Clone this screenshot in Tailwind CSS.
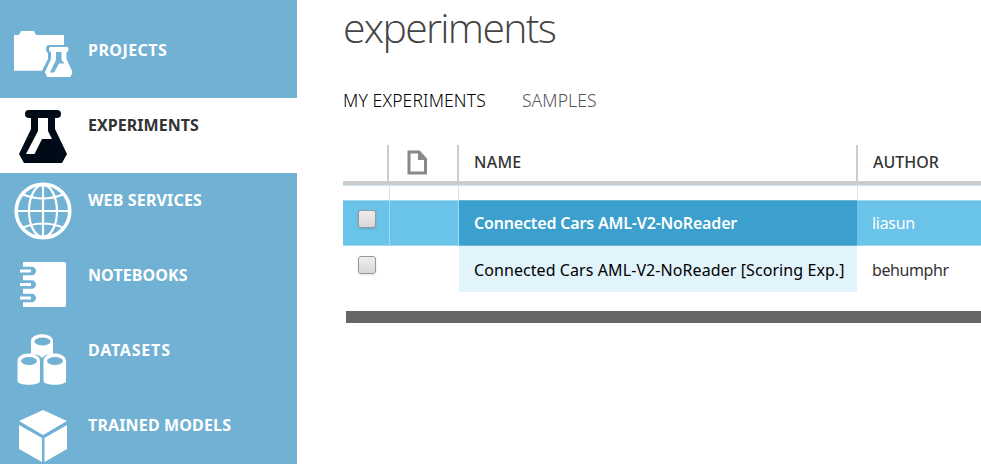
<!DOCTYPE html>
<html lang="en">
<head>
<meta charset="utf-8">
<title>experiments</title>
<script src="https://cdn.jsdelivr.net/npm/@tailwindcss/browser@4"></script>
</head>
<body class="flex h-[464px] w-[981px] overflow-hidden bg-white font-['Noto_Sans','Open_Sans',sans-serif] text-base leading-6 whitespace-nowrap">
<nav class="h-[464px] w-[297px] shrink-0 overflow-hidden bg-[#71b1d3] pt-[23px] font-bold text-white">
  <a class="flex h-[75px]">
    <svg class="h-[75px] w-[88px] shrink-0" viewBox="0 0 88 75" fill="#fff"><path d="M14 12h5l2-4h13l2 4h28v10H49q-3 0-3 4 0 3 2 4v6l-6 11.700H14z"/><path fill-rule="evenodd" d="M50 24h17q1.500 0 1.500 2.500T66.500 29v7l6 13-2 5H47l-2-5 6-13v-7q-2 0-2-2.500T50 24zM56 29v8l-6 12.500h4l5-9h5.500l-3-3.500v-8z"/></svg>
    <span class="pt-[15px] tracking-[0.45px]">PROJECTS</span>
  </a>
  <a class="flex h-[75px] bg-white text-[#333]">
    <svg class="h-[75px] w-[88px] shrink-0" viewBox="0 0 88 75" fill="#000b17"><path fill-rule="evenodd" d="M29 12h28q4 0 4 4t-4 4h-2v11l12 25-5 9H24l-5-9 12-25V20h-2q-4 0-4-4t4-4zM38 20v13L26 56h8.500L42 41h10l-4-8V20z"/></svg>
    <span class="pt-[15px] tracking-[0.05px]">EXPERIMENTS</span>
  </a>
  <a class="flex h-[75px]">
    <svg class="h-[75px] w-[88px] shrink-0" viewBox="0 0 88 75" fill="none" stroke="#fff" stroke-width="2.200"><circle cx="43" cy="38" r="26.800" stroke-width="3.600"/><ellipse cx="43" cy="38" rx="14" ry="26"/><path d="M43 11v54M16 38h54M22 21q21 9 42 0M22 55q21-9 42 0"/></svg>
    <span class="pt-[15px] tracking-[0.15px]">WEB SERVICES</span>
  </a>
  <a class="flex h-[75px]">
    <svg class="h-[75px] w-[88px] shrink-0" viewBox="0 0 88 75"><path fill="#fff" d="M23 14h41q2 0 2 2v41q0 2-2 2H23z"/><g fill="none"><path stroke="#71b1d3" stroke-width="8.600" d="M20 23h11.700M20 36.500h11.700M20 50h11.700" stroke-linecap="round"/><path stroke="#fff" stroke-width="3.200" d="M20 23h11M20 36.500h11M20 50h11"/></g></svg>
    <span class="pt-[15px] tracking-[0.1px]">NOTEBOOKS</span>
  </a>
  <a class="flex h-[75px]">
    <svg class="h-[75px] w-[88px] shrink-0" viewBox="0 0 88 75"><path fill="#fff" d="M31 18c0-9 22-9 22 0v13q-8 0-11 4-3-4-11-4zM17.500 38c0-10 22.500-10 22.500 0v20c0 5-22.500 5-22.500 0zM43.500 38c0-10 22.500-10 22.500 0v20c0 5-22.500 5-22.500 0z"/><g fill="#71b1d3"><ellipse cx="42.500" cy="18.500" rx="8" ry="4"/><ellipse cx="29" cy="38" rx="8" ry="4"/><ellipse cx="55" cy="38" rx="8" ry="4"/></g></svg>
    <span class="pt-[15px] tracking-[0.8px]">DATASETS</span>
  </a>
  <a class="flex h-[75px]">
    <svg class="h-[75px] w-[88px] shrink-0" viewBox="0 0 88 75" fill="#fff"><path d="M43 12l24 11-24 14L19 23zM19 27l23 13v24L19 51zM67 27L44.500 40v24L67 51z"/></svg>
    <span class="pt-[15px] tracking-[0.15px]">TRAINED MODELS</span>
  </a>
</nav>
<main class="flex min-w-0 flex-1 flex-col pl-[46px]">
  <h1 class="h-[88px] pt-px font-['Open_Sans','Noto_Sans',sans-serif] text-[41px] leading-[52px] font-light tracking-[-1.7px] text-[#444]">experiments</h1>
  <div class="flex h-[57px] gap-9 text-[17.5px] leading-[25px] font-light text-black">
    <span class="tracking-[0.14px]">MY EXPERIMENTS</span>
    <span class="tracking-[0.1px] text-[#555]">SAMPLES</span>
  </div>
  <div class="flex h-[36px] shrink-0 font-medium text-[#333]">
    <div class="w-[46px] border-r-2 border-[#ccc]"></div>
    <div class="flex w-[70px] border-r-2 border-[#ccc] pt-[5px] pl-[18px]">
      <svg class="h-[25px] w-[21px]" viewBox="0 0 21 25"><path fill="#fff" stroke="#888" stroke-width="3" d="M2 2h10l6.500 7v14H2z"/><path fill="#888" d="M11 1l9 9h-9z"/></svg>
    </div>
    <div class="w-[399px] border-r-2 border-[#ccc] pt-[5px] pl-[15px]"><span class="tracking-[0.25px]">NAME</span></div>
    <div class="pt-[5px] pl-[15px]"><span>AUTHOR</span></div>
  </div>
  <div class="h-[4px] shrink-0 bg-[#ccc]"></div>
  <div class="flex h-[15px] shrink-0 border-t border-[#cbe8f3]">
    <div class="w-[47px] border-r border-[#cbe8f3]"></div><div class="w-[69px] border-r border-[#cbe8f3]"></div><div class="w-[399px] border-r border-[#cbe8f3]"></div>
  </div>
  <div class="flex h-[46px] shrink-0 border-y border-[#a3d9f0] bg-[#6ac3e9] text-white">
    <div class="w-[47px] border-r border-[#a3d9f0] pt-[9px] pl-[15px]"><div class="h-[18px] w-[18px] rounded-[3px] border border-[#999] bg-linear-to-b from-[#eee] to-[#d8d8d8] shadow-sm"></div></div>
    <div class="w-[69px] border-r border-[#a3d9f0]"></div>
    <div class="-my-px w-[398px] border-y border-[#6ab5d8] bg-[#3ba0cd] pt-[10px] pl-[15px] font-semibold"><span class="tracking-[-0.17px]">Connected Cars AML-V2-NoReader</span></div>
    <div class="pt-[10px] pl-[15px]"><span class="tracking-[-0.3px]">liasun</span></div>
  </div>
  <div class="flex h-[46px] shrink-0 text-black">
    <div class="w-[47px] pt-[10px] pl-[15px]"><div class="h-[18px] w-[18px] rounded-[3px] border border-[#999] bg-linear-to-b from-[#eee] to-[#d8d8d8] shadow-sm"></div></div>
    <div class="w-[69px]"></div>
    <div class="w-[398px] bg-[#e1f3fb] pt-[12px] pl-[15px]"><span class="tracking-[0.08px]">Connected Cars AML-V2-NoReader [Scoring Exp.]</span></div>
    <div class="pt-[12px] pl-[15px] text-[#333]"><span class="tracking-[-0.4px]">behumphr</span></div>
  </div>
  <div class="mt-[19px] ml-[3px] h-[12px] shrink-0 bg-[#666]"></div>
</main>
</body>
</html>
